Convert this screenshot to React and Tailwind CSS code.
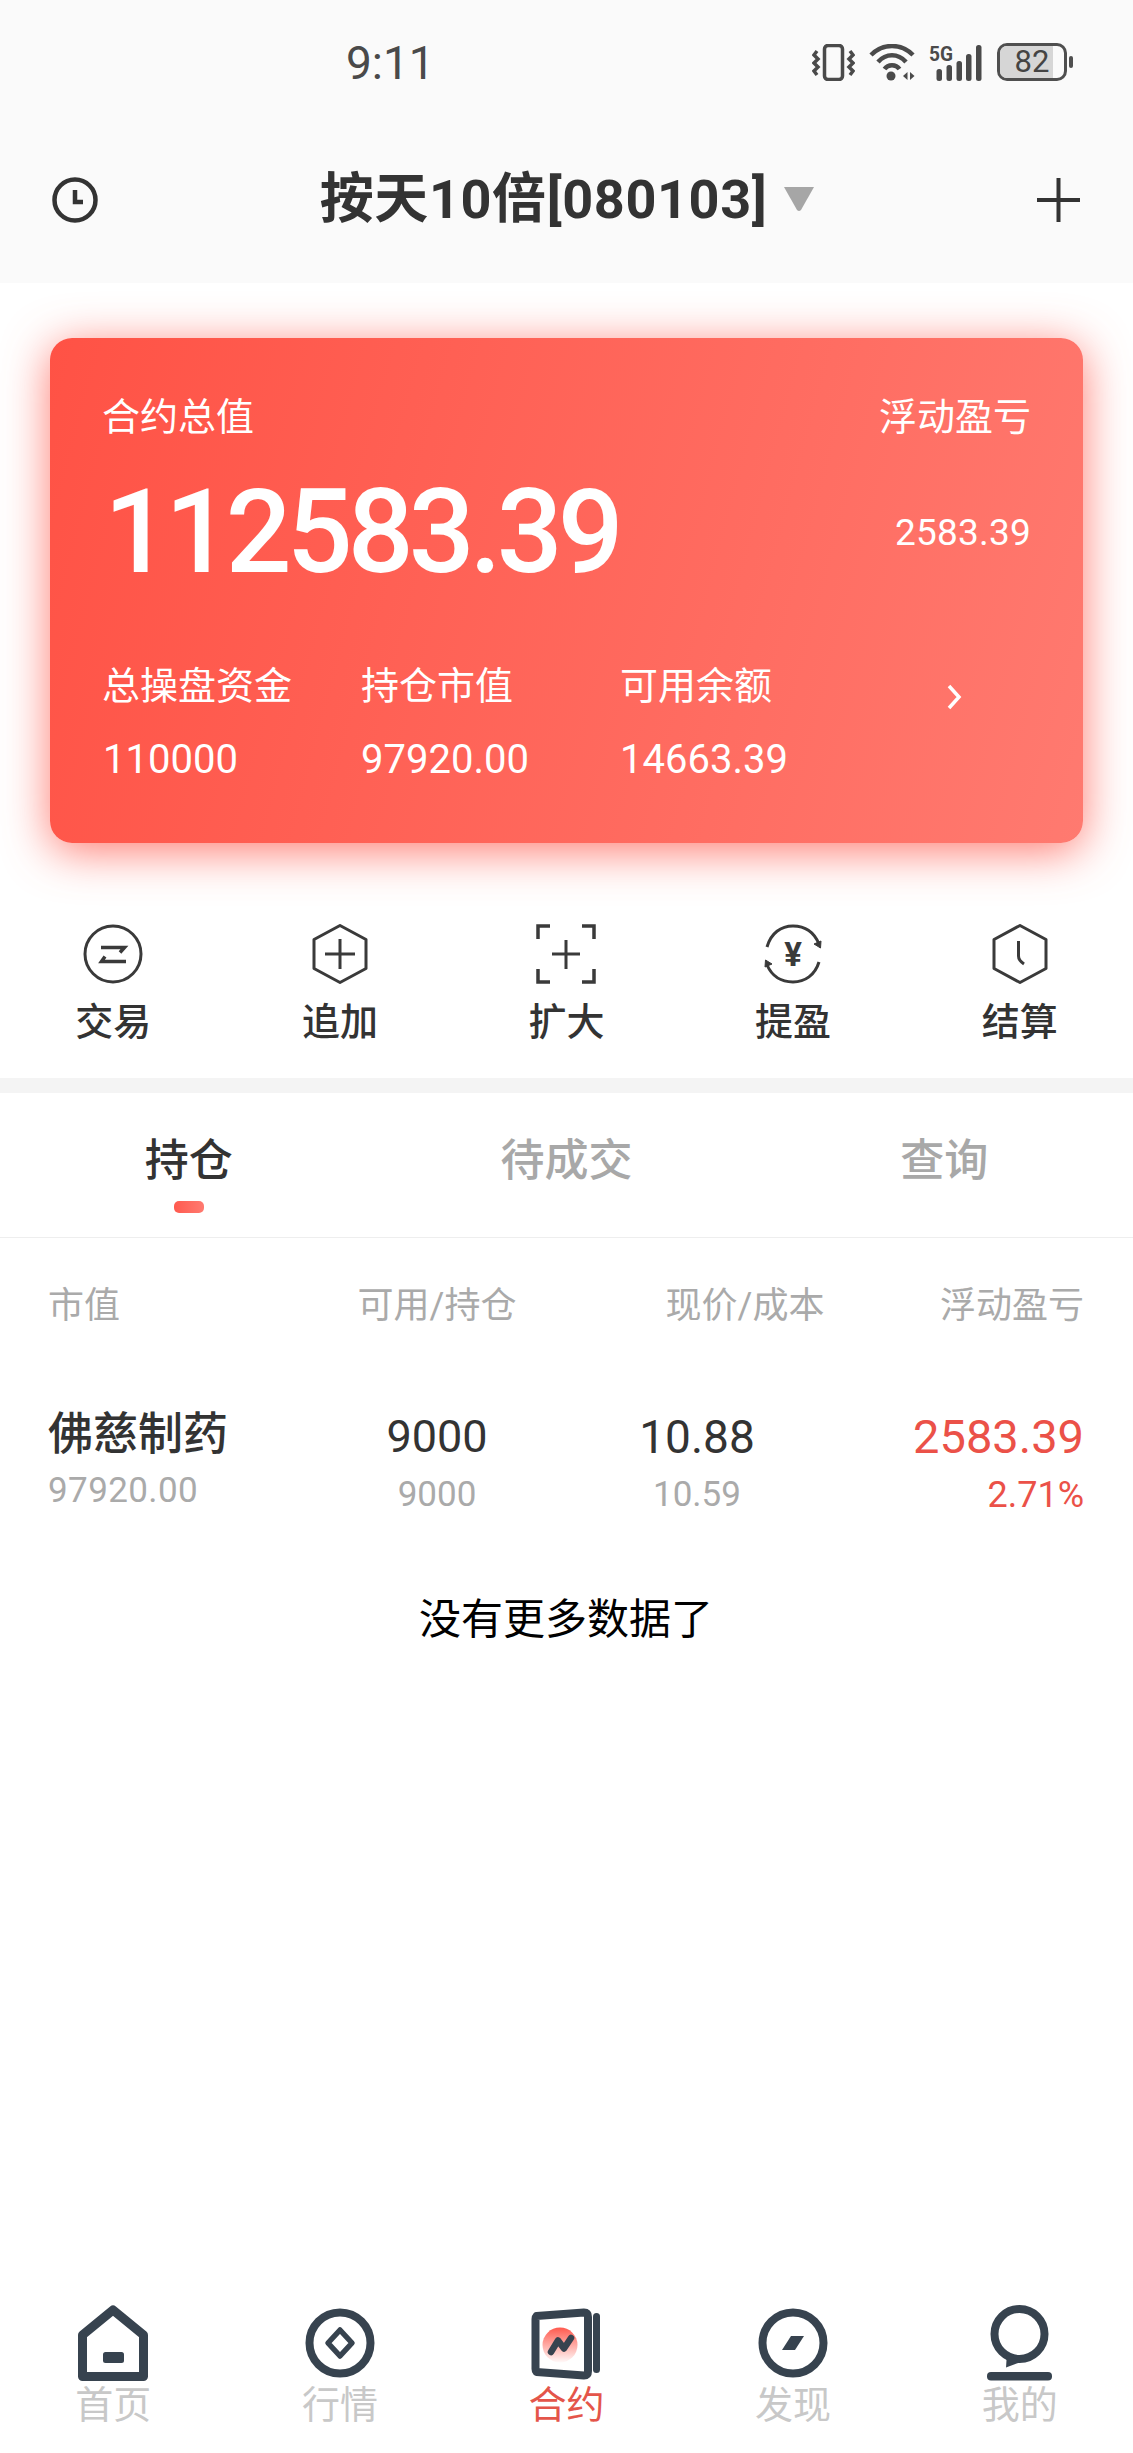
import React from "react";

const C = "#37434f";

function Hex({ children }) {
  return (
    <svg width="60" height="60" viewBox="0 0 60 60" fill="none" stroke="#3a3a3a" strokeWidth="3">
      <path d="M30 1.5L56 15.5V44.5L30 58.5L4 44.5V15.5Z" strokeLinejoin="round" />
      {children}
    </svg>
  );
}

const actions = [
  {
    label: "交易",
    icon: (
      <svg width="60" height="60" viewBox="0 0 60 60" fill="none" stroke="#3a3a3a" strokeWidth="3">
        <circle cx="30" cy="30" r="28" />
        <path d="M18 23.5H41.5L37 28.5" strokeWidth="3.5" />
        <path d="M43 37.5H18.5L22 32.5" strokeWidth="3.5" />
      </svg>
    ),
  },
  {
    label: "追加",
    icon: (
      <Hex>
        <path d="M15 30H45M30 15V45" />
      </Hex>
    ),
  },
  {
    label: "扩大",
    icon: (
      <svg width="60" height="60" viewBox="0 0 60 60" fill="none" stroke="#3a3a3a" strokeWidth="3.5">
        <path d="M14 2H2V15M46 2H58V15M2 45V58H14M58 45V58H46" />
        <path d="M16 30H44M30 16V45" strokeWidth="3" />
      </svg>
    ),
  },
  {
    label: "提盈",
    icon: (
      <svg width="60" height="60" viewBox="0 0 60 60" fill="none" stroke="#3a3a3a" strokeWidth="3">
        <path d="M4 23C8 9 18 2 30 2C42 2 51 8 56 20" />
        <path d="M51 20L58 17L57.500 24Z" fill="#3a3a3a" strokeWidth="1" />
        <path d="M56 38C52 51 42 58 30 58C18 58 9 52 4 41" />
        <path d="M9 40L2 43L2.500 36Z" fill="#3a3a3a" strokeWidth="1" />
        <text x="30" y="42" textAnchor="middle" fontSize="33" fontWeight="700" fill="#3a3a3a" stroke="none" fontFamily="Roboto, sans-serif">¥</text>
      </svg>
    ),
  },
  {
    label: "结算",
    icon: (
      <Hex>
        <path d="M28.500 17V32C28.500 35 31 38 34 40" />
      </Hex>
    ),
  },
];

const navItems = [
  {
    label: "首页",
    icon: (
      <svg width="76" height="76" viewBox="0 0 76 76" fill="none" stroke={C} strokeWidth="9" strokeLinejoin="round">
        <path d="M38 5L68.500 30V71.500H7.500V30Z" />
        <rect x="28" y="47" width="21" height="11" rx="2.500" fill={C} stroke="none" />
      </svg>
    ),
  },
  {
    label: "行情",
    icon: (
      <svg width="76" height="76" viewBox="0 0 76 76" fill="none" stroke={C} strokeWidth="8">
        <circle cx="38" cy="38" r="30.500" />
        <path d="M38 25L50 38L38 51L26 38Z" strokeWidth="5.500" strokeLinejoin="round" />
      </svg>
    ),
  },
  {
    label: "合约",
    active: true,
    icon: (
      <svg width="76" height="76" viewBox="0 0 76 76" fill="none">
        <defs>
          <linearGradient id="contractGlow" x1="0" y1="0" x2="0" y2="1">
            <stop offset="0" stopColor="#ff5a4e" />
            <stop offset="1" stopColor="#ff5a4e" stopOpacity="0.03" />
          </linearGradient>
        </defs>
        <path d="M8.500 11L56 7.500Q60 7.500 60 12V66Q60 70.500 56 70.500L8.500 67Q7.500 66 7.500 64V14Q7.500 12 8.500 11Z" stroke={C} strokeWidth="8" strokeLinejoin="round" />
        <circle cx="32" cy="40" r="17.500" fill="url(#contractGlow)" />
        <path d="M23 47L30 35.500L36 43.500L43 33" stroke={C} strokeWidth="6.500" strokeLinecap="round" strokeLinejoin="round" />
        <rect x="65" y="8" width="7" height="60" rx="3.500" fill={C} />
      </svg>
    ),
  },
  {
    label: "发现",
    icon: (
      <svg width="76" height="76" viewBox="0 0 76 76" fill="none" stroke={C} strokeWidth="8">
        <circle cx="38" cy="38" r="30.500" />
        <path d="M36 31H49L40 45H27Z" fill={C} stroke="none" />
      </svg>
    ),
  },
  {
    label: "我的",
    icon: (
      <svg width="76" height="76" viewBox="0 0 76 76" fill="none" stroke={C} strokeWidth="8">
        <ellipse cx="37.500" cy="29" rx="25" ry="25" />
        <path d="M25 48L24 62.500L39 57Z" fill={C} stroke="none" />
        <rect x="5" y="67" width="65" height="8.500" rx="4" fill={C} stroke="none" />
      </svg>
    ),
  },
];

export default function App() {
  return (
    <div className="flex min-h-[2453px] flex-col bg-white font-['Roboto','Noto_Sans_CJK_SC',sans-serif] text-[#333]">
      {/* header */}
      <header className="h-[283px] bg-[#fafafa]">
        <div className="flex h-[124px] items-center pr-[60px] pl-[346px]">
          <span className="mt-[2px] text-[46px] leading-none text-[#4a4a4a]">9:11</span>
          <div className="ml-auto flex items-center">
            <svg width="43" height="37" viewBox="0 0 43 37" fill="none" stroke="#4a4a4a" strokeWidth="3.500">
              <rect x="12.500" y="1.500" width="18" height="34" rx="3.500" strokeWidth="3.500" />
              <path d="M5 7L2 11L6 15L2 19L6 23L2 27L5 31" />
              <path d="M38 7L41 11L37 15L41 19L37 23L41 27L38 31" />
            </svg>
            <svg className="ml-[14px]" width="46" height="37" viewBox="0 0 46 37" fill="none" stroke="#4a4a4a" strokeWidth="4.500">
              <path d="M2 11C14 -1 32 -1 44 11" />
              <path d="M9 18C17 9 29 9 37 18" />
              <path d="M15.500 25C19 20 27 20 30.500 25" />
              <circle cx="22" cy="32" r="4.500" fill="#4a4a4a" stroke="none" />
              <path d="M34 32L38.500 28V36Z M45.500 32L41 28V36Z" fill="#4a4a4a" stroke="none" />
            </svg>
            <svg className="ml-[14px] overflow-visible" width="53" height="37" viewBox="0 0 53 37" fill="#4a4a4a">
              <text x="0" y="17" fontSize="21" fontWeight="700" fontFamily="Roboto, sans-serif" textLength="24" lengthAdjust="spacingAndGlyphs">5G</text>
              <rect x="7.500" y="25" width="5.500" height="12" rx="2.500" />
              <rect x="17.500" y="21" width="5.500" height="16" rx="2.500" />
              <rect x="27.500" y="17" width="5.500" height="20" rx="2.500" />
              <rect x="37" y="10" width="5.500" height="27" rx="2.500" />
              <rect x="47" y="1" width="5.500" height="36" rx="2.500" />
            </svg>
            <div className="relative ml-[15px] flex h-[38px] w-[70px] items-center justify-center rounded-[10px] border-[3px] border-[#4f4f4f]">
              <div className="absolute top-0 bottom-0 left-0 w-[83%] rounded-l-[7px] bg-[#d6d6d6]" />
              <span className="relative text-[31px] leading-[32px] text-[#444]">82</span>
            </div>
            <div className="ml-[2px] h-[12px] w-[4px] rounded-[2px] bg-[#4f4f4f]" />
          </div>
        </div>
        <div className="flex h-[152px] items-center justify-between pr-[53px] pl-[52px]">
          <svg width="46" height="46" viewBox="0 0 46 46" fill="none" stroke="#333" strokeWidth="4.500">
            <circle cx="23" cy="23" r="20.500" />
            <path d="M23 13V25H31" strokeWidth="4.500" />
          </svg>
          <div className="flex items-center">
            <span className="text-[54px] leading-[64px] font-bold tracking-[0.6px] text-[#333]">按天10倍[080103]</span>
            <svg className="mt-[-2px] ml-[16px]" width="32" height="26" viewBox="0 0 32 26" fill="#a6a6a6">
              <path d="M1 1H31L18 24Q16 26 14 24Z" />
            </svg>
          </div>
          <svg width="43" height="44" viewBox="0 0 43 44" fill="none" stroke="#333" strokeWidth="4">
            <path d="M0 22H43M21.500 0V44" />
          </svg>
        </div>
      </header>

      {/* card */}
      <section className="px-[50px] pt-[55px]">
        <div className="h-[505px] rounded-[22px] bg-[linear-gradient(105deg,#ff5245,#ff7a70)] pr-[52px] pl-[52px] text-white shadow-[0_8px_46px_rgba(255,84,72,0.78)]">
          <div className="flex justify-between pt-[55px] text-[38px] leading-[48px]">
            <span>合约总值</span>
            <span>浮动盈亏</span>
          </div>
          <div className="mt-[26px] flex h-[130px] items-center justify-between">
            <span className="ml-[2px] text-[116px] leading-none font-medium tracking-[-5px]">112583.39</span>
            <span className="text-[37px] leading-none tracking-[0.2px]">2583.39</span>
          </div>
          <div className="mt-[65px] flex text-[38px] leading-[48px]">
            <div className="w-[259px]">
              <div>总操盘资金</div>
              <div className="mt-[26px] ml-[1px] text-[40px]">110000</div>
            </div>
            <div className="w-[259px]">
              <div>持仓市值</div>
              <div className="mt-[26px] text-[40px]">97920.00</div>
            </div>
            <div className="w-[325px]">
              <div>可用余额</div>
              <div className="mt-[26px] text-[40px]">14663.39</div>
            </div>
            <svg className="mt-[22px] ml-[1px]" width="16" height="26" viewBox="0 0 16 26" fill="none" stroke="#fff" strokeWidth="3.500">
              <path d="M3 2L13 13L3 24" />
            </svg>
          </div>
        </div>
      </section>

      {/* actions */}
      <section className="grid h-[235px] grid-cols-5 pt-[81px]">
        {actions.map((a) => (
          <div key={a.label} className="flex flex-col items-center">
            {a.icon}
            <span className="mt-[14px] text-[38px] leading-[48px] font-medium text-[#333]">{a.label}</span>
          </div>
        ))}
      </section>
      <div className="h-[15px] bg-[#f4f4f4]" />

      {/* tabs */}
      <nav className="grid h-[145px] grid-cols-3 border-b-[1.500px] border-[#eeeeee] pt-[38px] text-[44px] leading-[60px] font-medium">
        <div className="flex flex-col items-center text-[#333]">
          <span>持仓</span>
          <span className="mt-[10px] h-[12px] w-[30px] rounded-[5px] bg-[linear-gradient(90deg,#ff5a4f,#ff7a70)]" />
        </div>
        <div className="text-center text-[#a8a8a8]">待成交</div>
        <div className="text-center text-[#a8a8a8]">查询</div>
      </nav>

      {/* table */}
      <section className="pr-[49px] pl-[48px]">
        <div className="flex pt-[44px] text-[36px] leading-[48px] text-[#aaaaaa]">
          <div className="w-[289px]">市值</div>
          <div className="w-[200px] text-center">可用/持仓</div>
          <div className="ml-[108px] w-[200px] text-center">现价/成本</div>
          <div className="flex-1 text-right">浮动盈亏</div>
        </div>
        <div className="flex pt-[77px]">
          <div className="w-[289px]">
            <div className="text-[45px] leading-[56px] font-medium text-[#333]">佛慈制药</div>
            <div className="mt-[8px] text-[35px] leading-[40px] tracking-[0.4px] text-[#aaaaaa]">97920.00</div>
          </div>
          <div className="w-[200px] pt-[2px] text-center">
            <div className="text-[45px] leading-[56px] text-[#333]">9000</div>
            <div className="mt-[10px] text-[35px] leading-[40px] text-[#aaaaaa]">9000</div>
          </div>
          <div className="ml-[60px] w-[200px] pt-[2px] text-center">
            <div className="text-[46px] leading-[56px] text-[#333]">10.88</div>
            <div className="mt-[10px] text-[35px] leading-[40px] text-[#aaaaaa]">10.59</div>
          </div>
          <div className="flex-1 pt-[2px] text-right text-[#eb5148]">
            <div className="text-[47px] leading-[56px]">2583.39</div>
            <div className="mt-[10px] text-[36px] leading-[40px]">2.71%</div>
          </div>
        </div>
        <div className="pt-[77px] text-center text-[42px] leading-[56px] text-black">没有更多数据了</div>
      </section>

      {/* bottom nav */}
      <footer className="mt-auto grid grid-cols-5 pb-[24px]">
        {navItems.map((n) => (
          <div key={n.label} className="flex flex-col items-center">
            {n.icon}
            <span className={n.active ? "text-[38px] leading-[48px] text-[#e4554a]" : "text-[38px] leading-[48px] text-[#c8c8c8]"}>{n.label}</span>
          </div>
        ))}
      </footer>
    </div>
  );
}
